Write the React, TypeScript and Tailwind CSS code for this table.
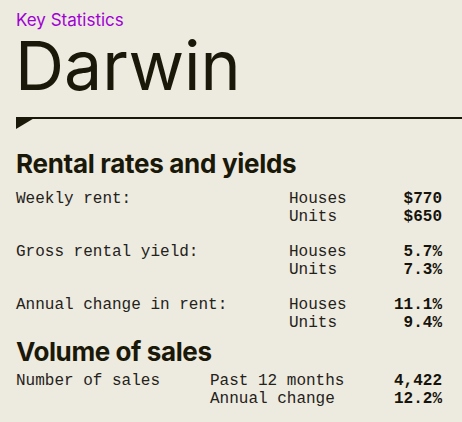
import React from "react";

const mono = { fontFamily: '"Liberation Mono", "DejaVu Sans Mono", monospace' };

function Group({ label, rows, first }: { label: string; rows: [string, string][]; first?: boolean }) {
  return (
    <div className={`grid grid-cols-[273px_1fr_auto] text-[16px] leading-[18px] text-[#24221a] ${first ? "" : "mt-[17px]"}`} style={mono}>
      {rows.map(([k, v], i) => (
        <React.Fragment key={k}>
          <div>{i === 0 ? label : ""}</div>
          <div>{k}</div>
          <div className="text-right font-bold text-[#15130b]">{v}</div>
        </React.Fragment>
      ))}
    </div>
  );
}

export default function App() {
  return (
    <div className="w-[462px] h-[422px] bg-[#edeadf] overflow-hidden" style={{ fontFamily: 'Inter, "Noto Sans", sans-serif' }}>
      <div className="pl-[16px] pr-[20px] pt-[10px]">
        <div className="text-[17px] leading-[20px] text-[#a100d4]">Key Statistics</div>
        <div className="text-[68px] leading-[76px] text-[#1a1809] -ml-[1px] -mt-[3px]">Darwin</div>
      </div>
      <div className="relative mt-[14px] ml-[16px] h-[2px] bg-[#1a1809]">
        <svg className="absolute left-0 top-0" width="20" height="12" viewBox="0 0 20 12">
          <polygon points="0,0 20,0 0,12" fill="#1a1809" />
        </svg>
      </div>
      <div className="pl-[16px] pr-[20px]">
        <div className="mt-[30px] text-[26px] leading-[30px] font-bold text-[#1a1809] tracking-[-0.3px]">Rental rates and yields</div>
        <div className="mt-[11px]">
          <Group first label="Weekly rent:" rows={[["Houses", "$770"], ["Units", "$650"]]} />
          <Group label="Gross rental yield:" rows={[["Houses", "5.7%"], ["Units", "7.3%"]]} />
          <Group label="Annual change in rent:" rows={[["Houses", "11.1%"], ["Units", "9.4%"]]} />
        </div>
        <div className="mt-[4px] text-[26px] leading-[32px] font-bold text-[#1a1809] tracking-[-0.4px]">Volume of sales</div>
        <div className="mt-[4px] grid grid-cols-[194px_1fr_auto] text-[16px] leading-[18px] text-[#24221a]" style={mono}>
          <div>Number of sales</div>
          <div>Past 12 months</div>
          <div className="text-right font-bold text-[#15130b]">4,422</div>
          <div></div>
          <div>Annual change</div>
          <div className="text-right font-bold text-[#15130b]">12.2%</div>
        </div>
      </div>
    </div>
  );
}
